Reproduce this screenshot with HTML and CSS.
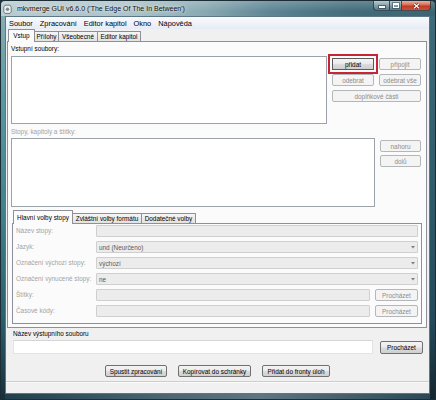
FILE: index.html
```html
<!DOCTYPE html>
<html lang="cs">
<head>
<meta charset="utf-8">
<title>mkvmerge GUI</title>
<link rel="stylesheet" href="styles.css">
</head>
<body>
<div class="window">
  <div class="titlebar">
    <svg class="appicon" width="9" height="10" viewBox="0 0 9 10">
      <path d="M2 1.2h5l1.2 2v4.6l-1.2 1.6h-5l-1.2-1.6v-4.6z" fill="#eef0f0" stroke="#55646a" stroke-width="0.8"/>
      <circle cx="4.5" cy="5.3" r="1.7" fill="#7d8c92"/>
    </svg>
    <span class="title">mkvmerge GUI v6.6.0 ('The Edge Of The In Between')</span>
    <div class="caption">
      <span class="cbtn cmin"><i></i></span>
      <span class="cbtn cmax"><i></i></span>
      <span class="cbtn cclose">
        <svg width="7" height="6" viewBox="0 0 7 6"><path d="M1 0.8L6 5.2M6 0.8L1 5.2" stroke="#5a1a10" stroke-width="2.4"/><path d="M1 0.8L6 5.2M6 0.8L1 5.2" stroke="#fff" stroke-width="1.3"/></svg>
      </span>
    </div>
  </div>
  <div class="frame">
    <div class="client">
      <div class="menubar">
        <span class="menu">Soubor</span>
        <span class="menu">Zpracování</span>
        <span class="menu">Editor kapitol</span>
        <span class="menu">Okno</span>
        <span class="menu">Nápověda</span>
      </div>

      <div class="tabstrip main-tabs">
        <span class="tab sel w-vstup">Vstup</span>
        <span class="tab w-prilohy">Přílohy</span>
        <span class="tab w-vseob">Všeobecné</span>
        <span class="tab w-editor">Editor kapitol</span>
      </div>

      <div class="panel main-panel">
        <div class="label lbl-files">Vstupní soubory:</div>
        <div class="files-row">
          <div class="listbox files"></div>
          <div class="btn-grid">
            <button class="btn focus">přidat</button>
            <button class="btn dis">připojit</button>
            <button class="btn dis">odebrat</button>
            <button class="btn dis">odebrat vše</button>
            <button class="btn dis span2">doplňkové části</button>
          </div>
        </div>

        <div class="label dis-text lbl-tracks">Stopy, kapitoly a štítky:</div>
        <div class="tracks-row">
          <div class="listbox tracks"></div>
          <div class="btn-col">
            <button class="btn dis">nahoru</button>
            <button class="btn dis">dolů</button>
          </div>
        </div>

        <div class="tabstrip sub-tabs">
          <span class="tab sel w-hlavni">Hlavní volby stopy</span>
          <span class="tab w-zvlast">Zvláštní volby formátu</span>
          <span class="tab w-dodat">Dodatečné volby</span>
        </div>
        <div class="panel sub-panel">
          <div class="form">
            <span class="flabel">Název stopy:</span>
            <div class="field"></div>

            <span class="flabel">Jazyk:</span>
            <div class="field combo"><span class="val">und (Neurčeno)</span><svg class="arrow" width="4" height="3" viewBox="0 0 4 3"><path d="M0 0h4L2 2.5z"/></svg></div>

            <span class="flabel">Označení výchozí stopy:</span>
            <div class="field combo"><span class="val">výchozí</span><svg class="arrow" width="4" height="3" viewBox="0 0 4 3"><path d="M0 0h4L2 2.5z"/></svg></div>

            <span class="flabel">Označení vynucené stopy:</span>
            <div class="field combo"><span class="val">ne</span><svg class="arrow" width="4" height="3" viewBox="0 0 4 3"><path d="M0 0h4L2 2.5z"/></svg></div>

            <span class="flabel">Štítky:</span>
            <div class="browse-row"><div class="field"></div><button class="btn dis browse">Procházet</button></div>

            <span class="flabel">Časové kódy:</span>
            <div class="browse-row"><div class="field"></div><button class="btn dis browse">Procházet</button></div>
          </div>
        </div>
      </div>

      <div class="label out-label">Název výstupního souboru</div>
      <div class="out-row">
        <div class="out-input"></div>
        <button class="btn out-browse">Procházet</button>
      </div>

      <div class="actions">
        <button class="btn act-start">Spustit zpracování</button>
        <button class="btn act-copy">Kopírovat do schránky</button>
        <button class="btn act-queue">Přidat do fronty úloh</button>
      </div>

      <div class="statusbar"></div>
    </div>
  </div>
</div>
</body>
</html>
```

FILE: styles.css
```css
* { box-sizing: border-box; }
html, body { margin: 0; padding: 0; }
body {
  width: 436px;
  height: 400px;
  overflow: hidden;
  background: #1f3440;
  font-family: "Liberation Sans", Arial, sans-serif;
  font-size: 6.4px;
  color: #000;
}

/* ---------- window frame ---------- */
.window {
  width: 436px;
  height: 400px;
  display: flex;
  flex-direction: column;
  border: 1px solid #1c2d36;
  border-radius: 5px 5px 0 0;
  background: #3b6574;
  overflow: hidden;
}
.titlebar {
  height: 15px;
  flex: none;
  display: flex;
  align-items: flex-start;
  padding-left: 2px;
  background:
    linear-gradient(to bottom, rgba(255,255,255,0.2), rgba(255,255,255,0) 70%),
    linear-gradient(to right, #b8ccd1 0%, #aac3c9 30%, #88a9b2 47%, #5d8593 62%, #436d7c 80%, #3c6473 100%);
}
.appicon { flex: none; margin-top: 3px; }
.title {
  margin-left: 5px;
  margin-top: 3px;
  font-size: 7px;
  line-height: 9px;
  color: #111;
  white-space: nowrap;
  text-shadow: 0 0 3px rgba(255,255,255,0.95), 0 0 6px rgba(255,255,255,0.7);
}
.caption {
  margin-left: auto;
  margin-right: 4px;
  display: flex;
  flex: none;
}
.cbtn {
  height: 10px;
  display: flex;
  align-items: center;
  justify-content: center;
  border: 1px solid rgba(30,50,60,0.8);
  border-top: none;
}
.cmin {
  width: 16px;
  border-radius: 0 0 0 4px;
  border-right: none;
  background: linear-gradient(to bottom, rgba(255,255,255,0.55), rgba(220,235,240,0.35) 50%, rgba(120,150,160,0.35));
}
.cmax {
  width: 13px;
  background: linear-gradient(to bottom, rgba(255,255,255,0.55), rgba(220,235,240,0.35) 50%, rgba(120,150,160,0.35));
}
.cmin i {
  display: block;
  width: 6px;
  height: 2px;
  margin-top: 3px;
  background: #fff;
  box-shadow: 0 0 0 1px rgba(40,60,70,0.6);
}
.cmax i {
  display: block;
  width: 6px;
  height: 5px;
  border: 1px solid #fff;
  border-top-width: 2px;
  box-shadow: 0 0 0 1px rgba(40,60,70,0.5);
}
.cclose {
  width: 29px;
  border-left: none;
  border-radius: 0 0 4px 0;
  background: linear-gradient(to bottom, #eab0a2 0%, #d86a52 45%, #c23a22 55%, #c9523a 100%);
}
.frame {
  flex: 1;
  display: flex;
  padding: 0 5px 5px 4px;
  background:
    linear-gradient(to bottom, #86acb3 0%, #5b99a2 20%, #3f838e 50%, #2b606d 78%, #17303b 100%) left top / 4px 100% no-repeat,
    linear-gradient(to bottom, #3f6a79 0%, #305b6a 45%, #24495a 80%, #142730 100%) right top / 5px 100% no-repeat,
    linear-gradient(to right, #213e4b 0%, #4d6775 40%, #5e7683 60%, #2a4654 100%);
}
.client {
  flex: 1;
  display: flex;
  flex-direction: column;
  border: 1px solid #5c7884;
  background: #f0f0f0;
}

/* ---------- menu ---------- */
.menubar {
  height: 12px;
  flex: none;
  display: flex;
  align-items: center;
  gap: 7px;
  padding-left: 3px;
  font-size: 7.4px;
  background: linear-gradient(to bottom, #f9fafd, #e7ebf4);
}

/* ---------- tabs ---------- */
.tabstrip {
  display: flex;
  align-items: flex-end;
  flex: none;
  padding-left: 2px;
}
.main-tabs { height: 12px; }
.tab {
  height: 10px;
  display: flex;
  align-items: center;
  justify-content: center;
  border: 1px solid #8d9099;
  border-bottom: none;
  border-radius: 1px 1px 0 0;
  background: linear-gradient(to bottom, #f5f5f5, #e2e2e2);
  margin-right: -1px;
  white-space: nowrap;
}
.tab.sel {
  height: 13px;
  margin-bottom: -1px;
  background: #fbfbfb;
  position: relative;
  z-index: 1;
  padding-bottom: 1px;
}
.w-vstup { width: 27px; }
.w-prilohy { width: 25px; }
.w-vseob { width: 40px; }
.w-editor { width: 44px; }

.panel {
  border: 1px solid #8d9099;
  background: #fbfbfb;
}
.main-panel {
  height: 287px;
  width: 420px;
  margin-left: 1px;
  flex: none;
  padding: 2px 3px 3px 3px;
  display: flex;
  flex-direction: column;
}

.label {
  height: 10px;
  line-height: 10px;
  white-space: nowrap;
}
.dis-text { color: #a3a3a3; }
.lbl-files { flex: none; }

.files-row {
  margin-top: 2px;
  height: 68px;
  display: flex;
  flex: none;
}
.listbox {
  background: #fff;
  border: 1px solid #9da1a8;
}
.files { width: 316px; height: 68px; }
.btn-grid {
  margin-left: 5px;
  padding-top: 2px;
  display: grid;
  grid-template-columns: 42px 42px;
  grid-auto-rows: 12px;
  column-gap: 5px;
  row-gap: 4px;
  align-content: start;
}
.span2 { grid-column: 1 / 3; }

.btn {
  font-family: "Liberation Sans", Arial, sans-serif;
  font-size: 6.4px;
  height: 12px;
  padding: 0;
  margin: 0;
  border: 1px solid #707070;
  border-radius: 2px;
  color: #000;
  background: linear-gradient(to bottom, #f4f4f4 0%, #ebebeb 48%, #dcdcdc 52%, #cfcfcf 100%);
  white-space: nowrap;
  display: flex;
  align-items: center;
  justify-content: center;
}
.btn.dis {
  color: #8d8d8d;
  border-color: #b3b7ba;
  background: #f4f4f4;
}
.btn.focus {
  border-radius: 0;
  outline: 2px solid #c62633;
  outline-offset: 2px;
  border-color: #5b5b5b;
}

.lbl-tracks { margin-top: 3px; flex: none; }
.tracks-row {
  margin-top: 1px;
  height: 69px;
  display: flex;
  flex: none;
}
.tracks { width: 364px; height: 69px; }
.btn-col {
  margin-left: 5px;
  padding-top: 2px;
  width: 41px;
  display: flex;
  flex-direction: column;
  gap: 3px;
}

.sub-tabs {
  height: 13px;
  margin-top: 3px;
  padding-left: 2px;
}
.sub-tabs .tab { height: 10px; }
.sub-tabs .tab.sel { height: 14px; }
.w-hlavni { width: 60px; }
.w-zvlast { width: 70px; }
.w-dodat { width: 55px; }

.sub-panel {
  height: 101px;
  width: 410px;
  margin-left: 1px;
  flex: none;
  padding: 1px 3px 0 3px;
}
.form {
  display: grid;
  grid-template-columns: 80px 1fr;
  grid-auto-rows: 12px;
  row-gap: 4px;
}
.flabel {
  color: #a3a3a3;
  line-height: 12px;
  white-space: nowrap;
}
.field {
  height: 12px;
  background: #ececec;
  border: 1px solid #cfcfcf;
  border-radius: 1px;
}
.combo {
  display: flex;
  align-items: center;
  justify-content: space-between;
  padding: 0 2px 0 2px;
}
.val { color: #5a5a5a; }
.arrow { fill: #7e7e7e; flex: none; }
.browse-row {
  display: flex;
  gap: 5px;
}
.browse-row .field { flex: 1; }
.browse { width: 43px; }

/* ---------- output ---------- */
.out-label {
  height: 11px;
  line-height: 11px;
  padding-left: 7px;
  flex: none;
}
.out-row {
  margin-top: 1px;
  height: 14px;
  padding-left: 7px;
  display: flex;
  align-items: center;
  flex: none;
}
.out-input {
  width: 360px;
  height: 14px;
  background: #fff;
  border: 1px solid #e3e3e3;
  border-top-color: #d5d5d5;
}
.out-browse {
  width: 43px;
  margin-left: 7px;
  height: 13px;
  margin-top: 1px;
}

.actions {
  margin-top: 11px;
  height: 12px;
  display: flex;
  justify-content: center;
  gap: 11px;
  flex: none;
}
.act-start { width: 62px; }
.act-copy { width: 73px; }
.act-queue { width: 68px; }

.statusbar {
  margin-top: auto;
  height: 12px;
  flex: none;
  border-top: 1px solid #cdcdcd;
  background: #f1f1f1;
  box-shadow: inset 0 1px 0 #fafafa;
}
```
